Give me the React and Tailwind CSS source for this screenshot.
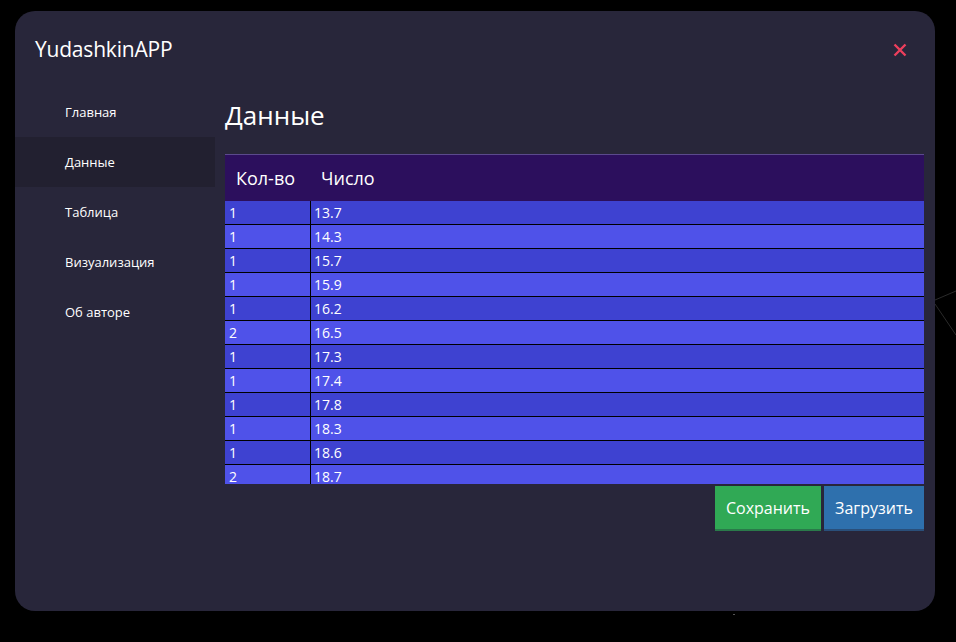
import React from 'react';

const rows = [
  [1, '13.7'],
  [1, '14.3'],
  [1, '15.7'],
  [1, '15.9'],
  [1, '16.2'],
  [2, '16.5'],
  [1, '17.3'],
  [1, '17.4'],
  [1, '17.8'],
  [1, '18.3'],
  [1, '18.6'],
  [2, '18.7'],
];

const menu = ['Главная', 'Данные', 'Таблица', 'Визуализация', 'Об авторе'];

export default function App() {
  return (
    <div
      className="relative w-[956px] h-[642px] bg-black overflow-hidden"
      style={{ fontFamily: '"Open Sans", "Noto Sans", sans-serif' }}
    >
      {/* faint background lines */}
      <svg className="absolute inset-0" width="956" height="642">
        <line x1="935" y1="300" x2="956" y2="291" stroke="#2a2a2a" strokeWidth="1" />
        <line x1="935" y1="304" x2="956" y2="335" stroke="#2a2a2a" strokeWidth="1" />
        <rect x="733" y="614" width="2" height="1" fill="#555" />
      </svg>

      <div className="absolute left-[15px] top-[11px] w-[920px] h-[600px] rounded-[20px] bg-[#28263a] text-white flex flex-col">
        {/* title bar */}
        <div className="flex items-center justify-between h-[76px] pl-[20px] pr-[28px] pt-[2px]">
          <span className="text-[21px] tracking-[-0.2px]">YudashkinAPP</span>
          <svg width="14" height="14" viewBox="0 0 14 14">
            <path d="M1.5 1.5 L12.5 12.5 M12.5 1.5 L1.5 12.5" stroke="#ec3f5c" strokeWidth="2.4" strokeLinecap="butt" />
          </svg>
        </div>

        <div className="flex flex-1">
          {/* sidebar */}
          <nav className="w-[200px] flex flex-col">
            {menu.map((m) => (
              <div
                key={m}
                className={`h-[50px] flex items-center pl-[50px] pt-[1px] text-[13px] ${m === 'Данные' ? 'bg-[#222030]' : ''}`}
              >
                {m}
              </div>
            ))}
          </nav>

          {/* content */}
          <div className="flex-1 pl-[10px] pr-[11px]">
            <h1 className="text-[26px] h-[67px] pt-[10px] leading-[36px]">Данные</h1>
            <div className="border-t border-[#5b4a8c]">
              <div className="h-[46px] bg-[#2c0f5d] flex items-center text-[18px] pt-[1px]">
                <div className="w-[86px] pl-[11px]">Кол-во</div>
                <div className="pl-[10px]">Число</div>
              </div>
              <div className="h-[283px] overflow-hidden">
                {rows.map((r, i) => (
                  <div
                    key={i}
                    className={`h-[24px] flex border-b border-black text-[14px] leading-[22px] ${i % 2 === 0 ? 'bg-[#3e42d1]' : 'bg-[#4f52e9]'}`}
                  >
                    <div className="w-[86px] pl-[4px] pt-[1px] border-r border-black">{r[0]}</div>
                    <div className="pl-[3px] pt-[1px]">{r[1]}</div>
                  </div>
                ))}
              </div>
            </div>
            <div className="flex justify-end gap-[3px] mt-[2px]">
              <button className="w-[106px] h-[45px] bg-[#30a955] border-b-2 border-[#2a7a4a] text-[16px]">
                Сохранить
              </button>
              <button className="w-[100px] h-[45px] bg-[#2e70ad] border-b-2 border-[#2a4f7a] text-[16px]">
                Загрузить
              </button>
            </div>
          </div>
        </div>
      </div>
    </div>
  );
}
